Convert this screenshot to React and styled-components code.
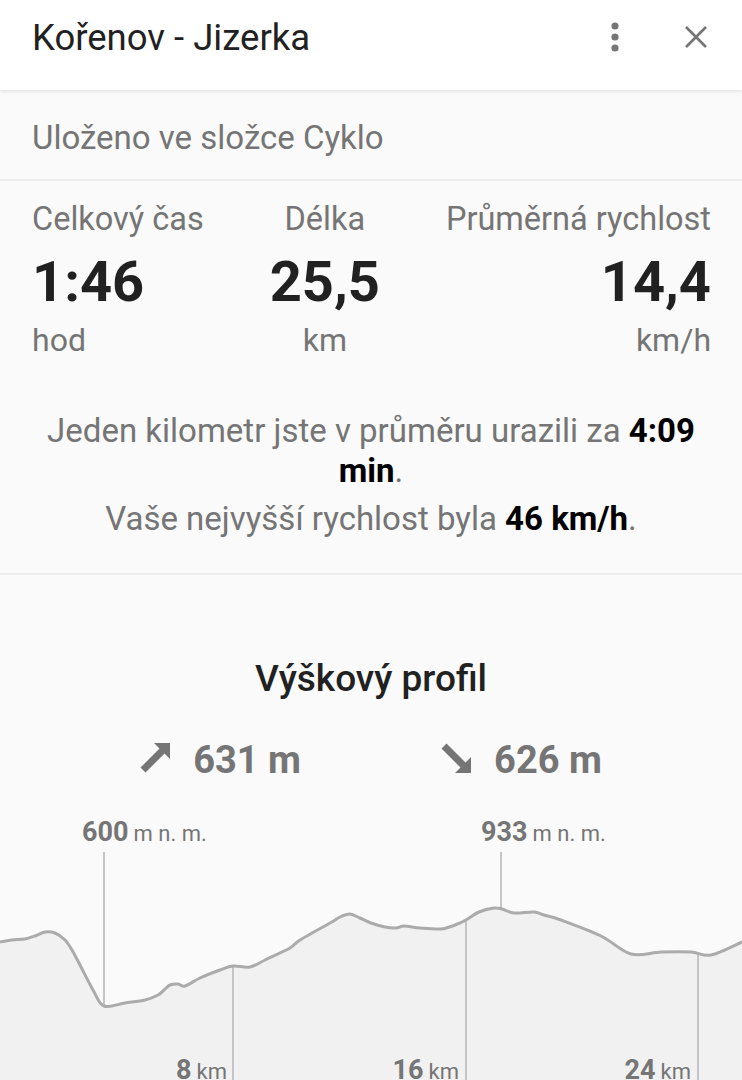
import React from "react";
import styled, { createGlobalStyle } from "styled-components";

const GlobalStyle = createGlobalStyle`
  html, body { margin: 0; padding: 0; }
  body {
    background: #fafafa;
    font-family: Roboto, "Noto Sans", "Liberation Sans", sans-serif;
    overflow: hidden;
  }
  * { box-sizing: border-box; }
`;

const Page = styled.div`
  width: 742px;
  height: 1080px;
  overflow: hidden;
  background: #fafafa;
`;

const Header = styled.header`
  position: relative;
  z-index: 2;
  height: 90px;
  padding: 0 34px 16px 32px;
  background: #ffffff;
  box-shadow: 0 2px 3px rgba(0, 0, 0, 0.08);
  display: flex;
  align-items: center;
`;

const Title = styled.h1`
  flex: 1;
  margin: 0;
  font-size: 36.5px;
  line-height: 37px;
  font-weight: 400;
  color: #212121;
`;

const Actions = styled.div`
  display: flex;
  align-items: center;
  gap: 64px;
`;

const IconButton = styled.span`
  display: flex;
  align-items: center;
  justify-content: center;
  width: ${(p) => p.$w}px;
  height: 30px;
`;

const FolderRow = styled.div`
  height: 91px;
  padding: 28px 32px 0;
  border-bottom: 2px solid #ececec;
  font-size: 33px;
  line-height: 39px;
  color: #757575;
`;

const Stats = styled.section`
  display: flex;
  justify-content: space-between;
  padding: 19px 31px 0 32px;
`;

const StatCol = styled.div`
  display: flex;
  flex-direction: column;
  align-items: ${(p) => p.$align};
`;

const StatLabel = styled.div`
  font-size: 32.5px;
  line-height: 38px;
  color: #757575;
`;

const StatValue = styled.div`
  margin-top: 11px;
  font-size: 56px;
  line-height: 66px;
  font-weight: 700;
  color: #212121;
`;

const StatUnit = styled.div`
  margin-top: 6px;
  font-size: 32px;
  line-height: 38px;
  color: #757575;
`;

const Summary = styled.section`
  padding: 52px 40px 34px;
  border-bottom: 2px solid #ececec;
  text-align: center;
`;

const SummaryLine = styled.p`
  margin: 0 0 8px;
  font-size: 33px;
  line-height: 40px;
  color: #757575;
  &:last-child { margin-bottom: 0; }
  b { color: #000; font-weight: 700; }
`;

const Profile = styled.section`
  padding-top: 82px;
`;

const ProfileTitle = styled.h2`
  margin: 0;
  text-align: center;
  font-size: 37px;
  line-height: 44px;
  font-weight: 500;
  color: #212121;
`;

const ElevationRow = styled.div`
  margin-top: 37px;
  display: flex;
  justify-content: space-evenly;
`;

const Elevation = styled.div`
  display: flex;
  align-items: center;
  gap: 23px;
  font-size: 38px;
  line-height: 44px;
  font-weight: 700;
  color: #757575;
  svg { margin-top: -4px; }
`;

const Chart = styled.div`
  position: relative;
  margin-top: 23px;
  height: 290px;
`;

const ChartSvg = styled.svg`
  display: block;
  width: 742px;
  height: 290px;
`;

const ChartLabel = styled.div`
  position: absolute;
  top: ${(p) => p.$top}px;
  left: ${(p) => p.$left}px;
  transform: ${(p) => (p.$alignRight ? "translateX(-100%)" : "none")};
  display: flex;
  align-items: baseline;
  gap: 5px;
  white-space: nowrap;
  color: #757575;
  line-height: 32px;
  b { font-size: 27px; font-weight: 700; }
  span { font-size: 22px; font-weight: 400; }
`;

const profilePoints = [
  [0, 942], [12, 940], [25, 939], [35, 936], [45, 932], [55, 933], [65, 940],
  [72, 950], [80, 965], [93, 990], [104, 1006], [125, 1003], [145, 1000],
  [158, 995], [164, 990], [170, 985], [178, 984], [185, 986], [200, 978],
  [220, 970], [233, 966], [250, 967], [265, 960], [290, 948], [300, 940],
  [330, 923], [340, 917], [350, 914], [360, 918], [371, 923], [385, 927],
  [396, 928], [404, 926], [420, 928], [441, 929], [455, 925], [466, 920],
  [479, 912], [494, 908], [502, 909], [514, 913], [534, 912], [544, 915],
  [561, 920], [601, 936], [631, 954], [661, 952], [691, 952], [711, 955],
  [742, 942],
];

function smoothPath(pts) {
  let d = `M${pts[0][0]},${pts[0][1]}`;
  for (let i = 0; i < pts.length - 1; i++) {
    const p0 = pts[i - 1] || pts[i];
    const p1 = pts[i];
    const p2 = pts[i + 1];
    const p3 = pts[i + 2] || p2;
    const c1x = p1[0] + (p2[0] - p0[0]) / 6;
    const c1y = p1[1] + (p2[1] - p0[1]) / 6;
    const c2x = p2[0] - (p3[0] - p1[0]) / 6;
    const c2y = p2[1] - (p3[1] - p1[1]) / 6;
    d += ` C${c1x.toFixed(1)},${c1y.toFixed(1)} ${c2x.toFixed(1)},${c2y.toFixed(1)} ${p2[0]},${p2[1]}`;
  }
  return d;
}

const MoreIcon = () => (
  <svg width="10" height="30" viewBox="0 0 10 30">
    <circle cx="5" cy="4" r="3.6" fill="#757575" />
    <circle cx="5" cy="15" r="3.6" fill="#757575" />
    <circle cx="5" cy="26" r="3.6" fill="#757575" />
  </svg>
);

const CloseIcon = () => (
  <svg width="24" height="24" viewBox="0 0 24 24">
    <path d="M2 2 L22 22 M22 2 L2 22" stroke="#757575" strokeWidth="2.6" fill="none" />
  </svg>
);

const ArrowIcon = ({ down }) => (
  <svg width="30" height="30" viewBox="0 0 30 30" style={down ? { transform: "rotate(90deg)" } : undefined}>
    <polygon points="14,0 30,0 30,16 24.5,10.5 5.5,29.5 0.5,24.5 19.5,5.5" fill="#757575" />
  </svg>
);

export default function App() {
  const linePath = smoothPath(profilePoints);
  const areaPath = `${linePath} L742,1100 L0,1100 Z`;
  return (
    <>
      <GlobalStyle />
      <Page>
        <Header>
          <Title>Kořenov - Jizerka</Title>
          <Actions>
            <IconButton $w={10}><MoreIcon /></IconButton>
            <IconButton $w={24}><CloseIcon /></IconButton>
          </Actions>
        </Header>

        <FolderRow>Uloženo ve složce Cyklo</FolderRow>

        <Stats>
          <StatCol $align="flex-start">
            <StatLabel>Celkový čas</StatLabel>
            <StatValue>1:46</StatValue>
            <StatUnit>hod</StatUnit>
          </StatCol>
          <StatCol $align="center">
            <StatLabel>Délka</StatLabel>
            <StatValue>25,5</StatValue>
            <StatUnit>km</StatUnit>
          </StatCol>
          <StatCol $align="flex-end">
            <StatLabel>Průměrná rychlost</StatLabel>
            <StatValue>14,4</StatValue>
            <StatUnit>km/h</StatUnit>
          </StatCol>
        </Stats>

        <Summary>
          <SummaryLine>
            Jeden kilometr jste v průměru urazili za <b>4:09 min</b>.
          </SummaryLine>
          <SummaryLine>
            Vaše nejvyšší rychlost byla <b>46 km/h</b>.
          </SummaryLine>
        </Summary>

        <Profile>
          <ProfileTitle>Výškový profil</ProfileTitle>
          <ElevationRow>
            <Elevation>
              <ArrowIcon />
              631 m
            </Elevation>
            <Elevation>
              <ArrowIcon down />
              626 m
            </Elevation>
          </ElevationRow>

          <Chart>
            <ChartSvg viewBox="0 805 742 290">
              <path d={areaPath} fill="#f1f1f1" />
              <g stroke="#c4c4c4" strokeWidth="2">
                <line x1="104" y1="852" x2="104" y2="1006" />
                <line x1="501" y1="852" x2="501" y2="909" />
                <line x1="233" y1="966" x2="233" y2="1100" />
                <line x1="466" y1="920" x2="466" y2="1100" />
                <line x1="698" y1="953" x2="698" y2="1100" />
              </g>
              <path d={linePath} fill="none" stroke="#ababab" strokeWidth="3" strokeLinejoin="round" />
            </ChartSvg>
            <ChartLabel $left={82} $top={11}>
              <b>600</b><span>m n. m.</span>
            </ChartLabel>
            <ChartLabel $left={481} $top={11}>
              <b>933</b><span>m n. m.</span>
            </ChartLabel>
            <ChartLabel $left={227} $top={249} $alignRight>
              <b>8</b><span>km</span>
            </ChartLabel>
            <ChartLabel $left={459} $top={249} $alignRight>
              <b>16</b><span>km</span>
            </ChartLabel>
            <ChartLabel $left={691} $top={249} $alignRight>
              <b>24</b><span>km</span>
            </ChartLabel>
          </Chart>
        </Profile>
      </Page>
    </>
  );
}
